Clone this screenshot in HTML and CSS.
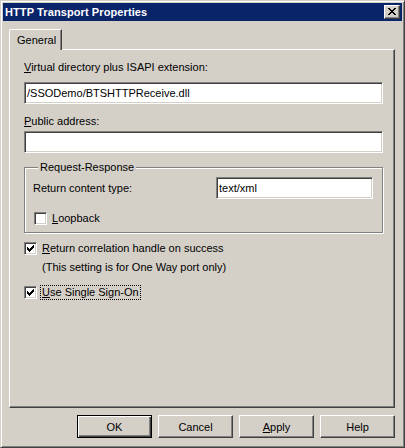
FILE: index.html
```html
<!DOCTYPE html>
<html>
<head>
<meta charset="utf-8">
<link rel="stylesheet" href="styles.css">
</head>
<body>
<div class="window">
  <div class="titlebar">
    <span class="title">HTTP Transport Properties</span>
    <span class="close"><svg width="8" height="7" viewBox="0 0 8 7"><path d="M0 0h2v1h-2zM6 0h2v1h-2zM1 1h2v1h-2zM5 1h2v1h-2zM2 2h4v1h-4zM3 3h2v1h-2zM2 4h4v1h-4zM1 5h2v1h-2zM5 5h2v1h-2zM0 6h2v1h-2zM6 6h2v1h-2z" fill="#000"/></svg></span>
  </div>
  <div class="client">
    <div class="tabs"><div class="tab">General</div></div>
    <div class="panel">
      <div class="label"><u>V</u>irtual directory plus ISAPI extension:</div>
      <div class="textbox">/SSODemo/BTSHTTPReceive.dll</div>
      <div class="label label2"><u>P</u>ublic address:</div>
      <div class="textbox tb2"></div>
      <fieldset class="group">
        <legend>Request-Response</legend>
        <div class="grow">
          <span class="glabel">Return content type:</span>
          <div class="textbox small">text/xml</div>
        </div>
        <div class="check loop"><span class="box"></span><span class="ctext"><u>L</u>oopback</span></div>
      </fieldset>
      <div class="check corr"><span class="box checked"><svg width="7" height="7" viewBox="0 0 7 7"><path d="M0 2h1v1h1v1h1v-1h1v-1h1v-1h1v-1h1v3h-1v1h-1v1h-1v1h-1v1h-1v-1h-1v-1h-1z" fill="#000"/></svg></span><span class="ctext"><u>R</u>eturn correlation handle on success</span></div>
      <div class="note">(This setting is for One Way port only)</div>
      <div class="check sso"><span class="box checked"><svg width="7" height="7" viewBox="0 0 7 7"><path d="M0 2h1v1h1v1h1v-1h1v-1h1v-1h1v-1h1v3h-1v1h-1v1h-1v1h-1v1h-1v-1h-1v-1h-1z" fill="#000"/></svg></span><span class="ctext focus"><u>U</u>se Single Sign-On</span></div>
    </div>
    <div class="buttons">
      <div class="btn default">OK</div>
      <div class="btn">Cancel</div>
      <div class="btn"><u>A</u>pply</div>
      <div class="btn">Help</div>
    </div>
  </div>
</div>
</body>
</html>
```

FILE: styles.css
```css
* { box-sizing: border-box; }
html, body { margin: 0; padding: 0; background: #d4d0c8; }
body {
  font-family: "Liberation Sans", Arial, sans-serif;
  font-size: 11px;
  color: #000;
}
.window {
  width: 405px;
  height: 448px;
  border: 1px solid;
  border-color: #d4d0c8 #404040 #404040 #d4d0c8;
  box-shadow: inset 1px 1px #fff, inset -1px -1px #808080;
  padding: 2px;
  display: flex;
  flex-direction: column;
  background: #d4d0c8;
}
.titlebar {
  height: 18px;
  background: #0a246a;
  display: flex;
  align-items: center;
  justify-content: space-between;
  padding: 0 2px 0 2px;
}
.title {
  color: #fff;
  font-weight: bold;
  font-size: 11px;
  letter-spacing: 0.1px;
}
.close {
  width: 16px;
  height: 14px;
  background: #d4d0c8;
  border: 1px solid;
  border-color: #fff #404040 #404040 #fff;
  box-shadow: inset -1px -1px #808080;
  display: flex;
  align-items: center;
  justify-content: center;
  padding-bottom: 1px;
}
.client {
  padding: 8px 7px 0 6px;
  display: flex;
  flex-direction: column;
}
.tabs {
  display: flex;
  height: 20px;
  position: relative;
  z-index: 1;
}
.tab {
  width: 53px;
  height: 21px;
  background: #d4d0c8;
  border-left: 1px solid #fff;
  border-top: 1px solid #fff;
  border-right: 1px solid #404040;
  border-top-left-radius: 2px;
  box-shadow: inset -1px 0 #808080;
  padding: 4px 0 0 7px;
}
.panel {
  height: 359px;
  border: 1px solid;
  border-color: #fff #404040 #404040 #fff;
  box-shadow: inset -1px -1px #808080;
  padding: 11px 11px 0 14px;
  display: flex;
  flex-direction: column;
}
.label { line-height: 13px; }
.textbox {
  height: 22px;
  margin-top: 8px;
  background: #fff;
  border: 1px solid;
  border-color: #808080 #fff #fff #808080;
  box-shadow: inset 1px 1px #404040, inset -1px -1px #d4d0c8;
  padding: 4px 0 0 2px;
  line-height: 13px;
}
.label2 { margin-top: 11px; }
.textbox.tb2 { margin-top: 3px; }
.group {
  margin: 8px 0 0 0;
  padding: 0 9px 0 8px;
  height: 72px;
  border: 1px solid #808080;
  box-shadow: 1px 1px 0 #fff, inset 1px 1px 0 #fff;
  display: flex;
  flex-direction: column;
}
.group legend {
  padding: 0 2px;
  margin-left: 5px;
  line-height: 13px;
  background: #d4d0c8;
}
.grow {
  display: flex;
  align-items: center;
  justify-content: space-between;
  margin-top: 3px;
}
.textbox.small {
  width: 157px;
  margin-top: 0;
}
.check {
  display: flex;
  align-items: center;
}
.box {
  width: 13px;
  height: 13px;
  background: #fff;
  border: 1px solid;
  border-color: #808080 #fff #fff #808080;
  box-shadow: inset 1px 1px #404040, inset -1px -1px #d4d0c8;
  display: flex;
  align-items: center;
  justify-content: center;
  flex-shrink: 0;
}
.ctext {
  margin-left: 5px;
  line-height: 13px;
}
.loop { margin-top: 13px; margin-left: 1px; }
.corr { margin-top: 9px; }
.note { margin-top: 6px; margin-left: 18px; line-height: 13px; }
.sso { margin-top: 12px; }
.focus {
  outline: 1px dotted #000;
  outline-offset: 0;
  padding: 0 1px;
  margin-left: 4px;
}
.buttons {
  display: flex;
  justify-content: flex-end;
  gap: 6px;
  margin-top: 7px;
}
.btn {
  width: 75px;
  height: 23px;
  border: 1px solid;
  border-color: #fff #404040 #404040 #fff;
  box-shadow: inset -1px -1px #808080;
  display: flex;
  align-items: center;
  justify-content: center;
}
.btn.default {
  border: 1px solid #000;
  box-shadow: inset 1px 1px #fff, inset -1px -1px #404040, inset -2px -2px #808080;
}
```
